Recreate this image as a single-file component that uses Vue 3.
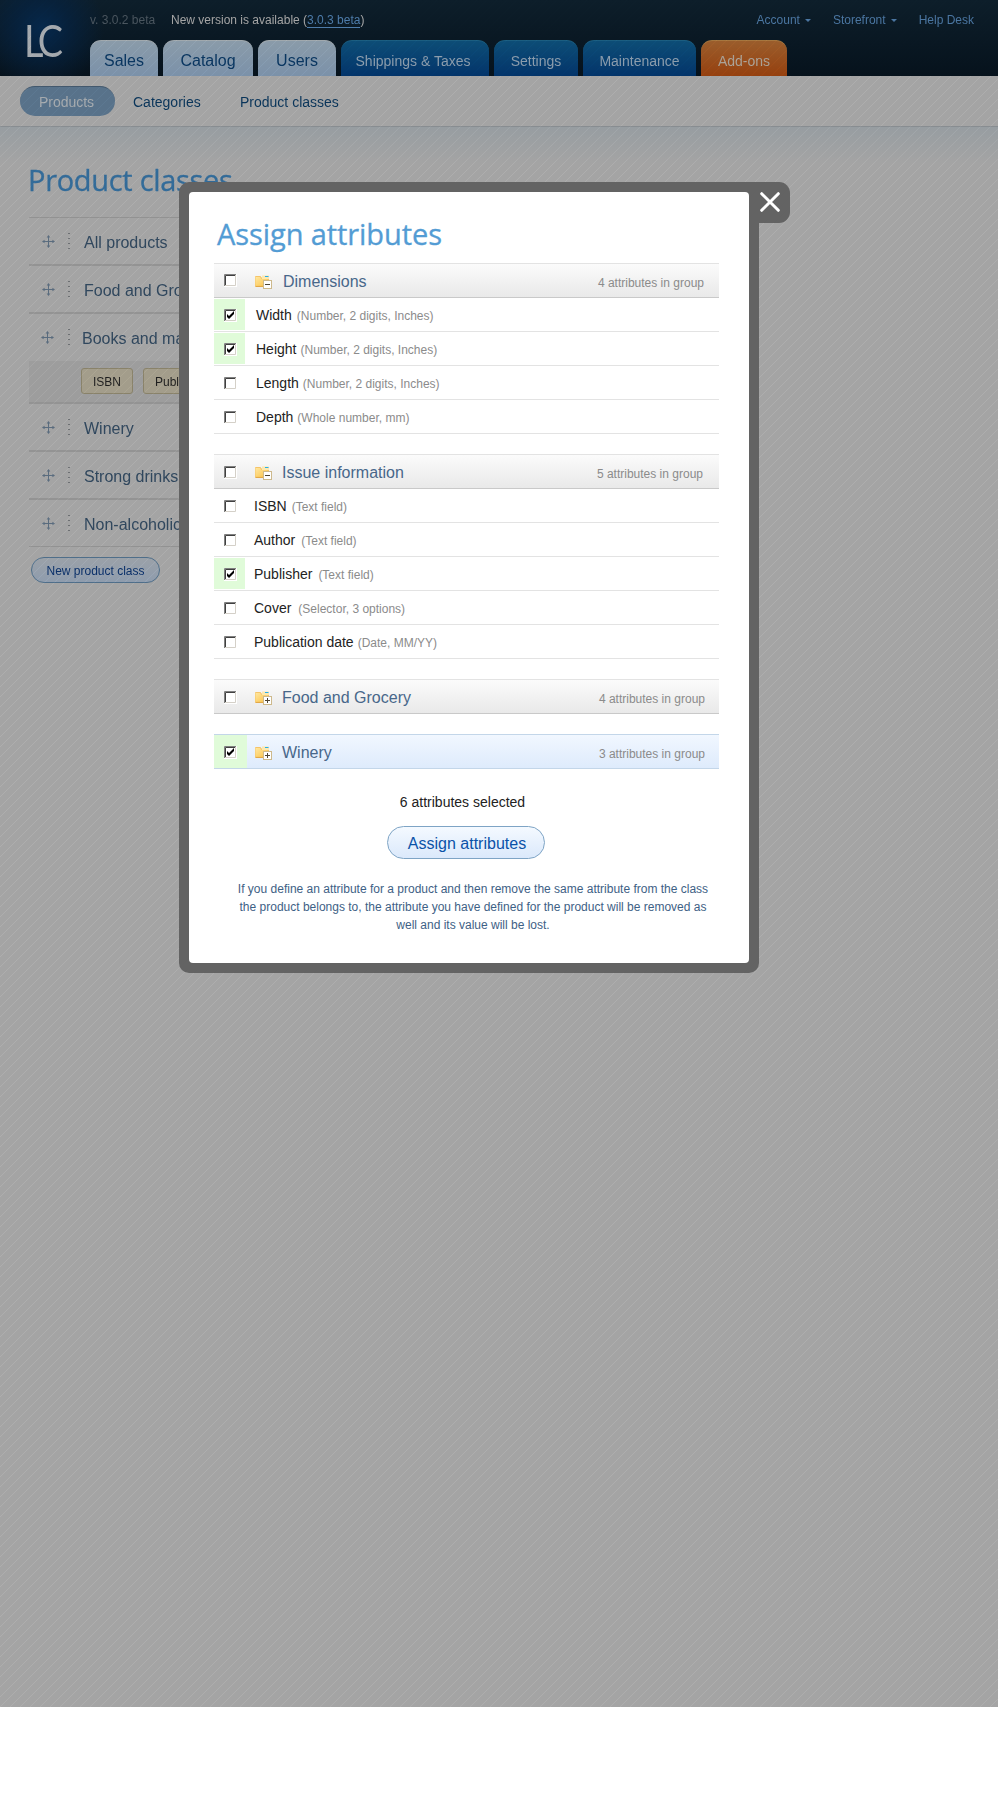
<script setup>
const tabs = [
  { label: 'Sales', kind: 'light', cls: 'w-sales' },
  { label: 'Catalog', kind: 'light', cls: 'w-catalog' },
  { label: 'Users', kind: 'light', cls: 'w-users' },
  { label: 'Shippings & Taxes', kind: 'blue', cls: 'w-ship' },
  { label: 'Settings', kind: 'blue', cls: 'w-settings' },
  { label: 'Maintenance', kind: 'blue', cls: 'w-maint' },
  { label: 'Add-ons', kind: 'orange', cls: 'w-addons' },
]

const classes = [
  { name: 'All products' },
  { name: 'Food and Grocery' },
  { name: 'Books and magazines', shifted: true, tags: ['ISBN', 'Publisher'] },
  { name: 'Winery' },
  { name: 'Strong drinks' },
  { name: 'Non-alcoholic drinks' },
]

const groups = [
  {
    name: 'Dimensions', count: 4, open: true, cls: 'first',
    items: [
      { name: 'Width', meta: '(Number, 2 digits, Inches)', on: true, gap: 5 },
      { name: 'Height', meta: '(Number, 2 digits, Inches)', on: true, gap: 4 },
      { name: 'Length', meta: '(Number, 2 digits, Inches)', gap: 4 },
      { name: 'Depth', meta: '(Whole number, mm)', gap: 4 },
    ],
  },
  {
    name: 'Issue information', count: 5, open: true, cls: 'second',
    items: [
      { name: 'ISBN', meta: '(Text field)', gap: 5 },
      { name: 'Author', meta: '(Text field)', gap: 6 },
      { name: 'Publisher', meta: '(Text field)', on: true, gap: 6 },
      { name: 'Cover', meta: '(Selector, 3 options)', gap: 7 },
      { name: 'Publication date', meta: '(Date, MM/YY)', gap: 4 },
    ],
  },
  { name: 'Food and Grocery', count: 4, items: [] },
  { name: 'Winery', count: 3, on: true, items: [] },
]
</script>

<template>
  <div class="screen">
    <div class="page">
      <header class="top">
        <div class="logo"><span>LC</span></div>
        <div class="bar">
          <div class="meta-line">
            <span class="ver">v. 3.0.2 beta</span>
            <span class="notice">New version is available (<a>3.0.3 beta</a>)</span>
            <nav class="links">
              <a>Account<i class="caret"></i></a>
              <a>Storefront<i class="caret"></i></a>
              <a>Help Desk</a>
            </nav>
          </div>
          <nav class="tabs">
            <a v-for="t in tabs" :key="t.label" class="tab" :class="[t.kind, t.cls]">{{ t.label }}</a>
          </nav>
        </div>
      </header>
      <nav class="sub">
        <a class="pill">Products</a>
        <a class="cat">Categories</a>
        <a class="pc">Product classes</a>
      </nav>
      <main class="content">
        <h1>Product classes</h1>
        <ul class="list">
          <li v-for="c in classes" :key="c.name">
            <div class="item" :class="{ shifted: c.shifted }">
              <svg class="move" width="13" height="13" viewBox="0 0 13 13">
                <path d="M6.5 1V12M1 6.5H12" stroke="#5a6c7e" stroke-width="1" />
                <path d="M6.5 0L8.3 2.6H4.7ZM6.5 13L8.3 10.4H4.7ZM0 6.5L2.6 4.7V8.3ZM13 6.5L10.4 4.7V8.3Z" fill="#5a6c7e" />
              </svg>
              <svg class="dots" width="2" height="18" viewBox="0 0 2 18">
                <path d="M0 1.5H2M0 6.5H2M0 11.5H2M0 16.5H2" stroke="#6c6f72" stroke-width="1.2" />
              </svg>
              <span>{{ c.name }}</span>
            </div>
            <div v-if="c.tags" class="tags">
              <span v-for="t in c.tags" :key="t" class="tag">{{ t }}</span>
            </div>
          </li>
        </ul>
        <button class="new">New product class</button>
      </main>
      <svg class="stripes" width="998" height="1707">
        <defs>
          <pattern id="hatch" width="10" height="10" patternUnits="userSpaceOnUse">
            <path d="M-3 10L10 -3M4 13L13 4M-3 0L0 -3" stroke="#0e0e0e" stroke-width="1" />
          </pattern>
        </defs>
        <rect width="998" height="1707" fill="url(#hatch)" />
      </svg>
    </div>

    <section class="modal">
      <div class="close">
        <svg width="20" height="20" viewBox="0 0 20 20">
          <path d="M1.7 1.7L18.3 18.3M18.3 1.7L1.7 18.3" stroke="#fff" stroke-width="3" stroke-linecap="round" />
        </svg>
      </div>
      <div class="dialog">
        <h2>Assign attributes</h2>
        <div v-for="(g, gi) in groups" :key="g.name" class="group" :class="g.cls">
          <div class="head" :class="{ active: g.on }">
            <div class="cell" :class="{ on: g.on }">
              <svg class="box" width="13" height="13" viewBox="0 0 13 13">
                <rect width="13" height="13" fill="#fff" />
                <path d="M1 11.5H11.5V1" fill="none" stroke="#d4d0c8" />
                <path d="M.5 12V.5H12" fill="none" stroke="#808080" />
                <path d="M1.5 11V1.5H11" fill="none" stroke="#404040" />
                <path v-if="g.on" d="M3 5v3l2 2 5-5V2L5 7Z" fill="#000" />
              </svg>
            </div>
            <svg class="folder" width="18" height="15" viewBox="0 0 18 15">
              <defs>
                <linearGradient :id="'fg' + gi" x1="0" y1="0" x2="1" y2="1">
                  <stop offset="0" stop-color="#ffe7a0" /><stop offset="1" stop-color="#fbc248" />
                </linearGradient>
              </defs>
              <path d="M0 2Q0 1 1 1H5.5L6.5 2.5H14V10L11 12H1L0 11Z" fill="#f5c469" />
              <path d="M7 .5H14V4H7Z" fill="#fde9b0" />
              <path d="M10 1.5H13.5" stroke="#2aaee8" />
              <path d="M.5 2H5L6.5 4H12.5V9L10.5 11H.5Z" :fill="`url(#fg${gi})`" />
              <path d="M.5 11.4H9" stroke="#e0a544" />
              <rect x="8.5" y="5.5" width="8" height="8" fill="#fff" stroke="#cdb98c" />
              <path d="M10 9.5H15" stroke="#4d4433" />
              <path v-if="!g.open" d="M12.5 7V12" stroke="#4d4433" />
            </svg>
            <span class="gname">{{ g.name }}</span>
            <span class="count">{{ g.count }} attributes in group</span>
          </div>
          <div v-for="a in g.items" :key="a.name" class="row">
            <div class="cell" :class="{ on: a.on }">
              <svg class="box" width="13" height="13" viewBox="0 0 13 13">
                <rect width="13" height="13" fill="#fff" />
                <path d="M1 11.5H11.5V1" fill="none" stroke="#d4d0c8" />
                <path d="M.5 12V.5H12" fill="none" stroke="#808080" />
                <path d="M1.5 11V1.5H11" fill="none" stroke="#404040" />
                <path v-if="a.on" d="M3 5v3l2 2 5-5V2L5 7Z" fill="#000" />
              </svg>
            </div>
            <span class="aname">{{ a.name }}</span>
            <span class="ameta" :style="{ marginLeft: a.gap + 'px' }">{{ a.meta }}</span>
          </div>
        </div>
        <div class="selected">6 attributes selected</div>
        <button class="assign">Assign attributes</button>
        <p class="note">
          If you define an attribute for a product and then remove the same attribute from the class<br />
          the product belongs to, the attribute you have defined for the product will be removed as<br />
          well and its value will be lost.
        </p>
      </div>
    </section>
  </div>
</template>

<style>
html, body { background: #fff; }
</style>

<style scoped>
* { box-sizing: border-box; }
.screen {
  position: relative;
  width: 998px;
  height: 1820px;
  overflow: hidden;
  font-family: "Liberation Sans", Arial, sans-serif;
  font-size: 12px;
}
.page { position: relative; height: 1707px; background: #a4a4a4; isolation: isolate; }
.stripes { position: absolute; left: 0; top: 0; mix-blend-mode: color-dodge; }

.top {
  display: flex;
  height: 76px;
  background:
    radial-gradient(ellipse 62px 62px at 42px 28px, #06284b 0%, rgba(6, 34, 64, .75) 45%, rgba(6, 30, 55, 0) 100%),
    linear-gradient(#0d1e2a, #06121c);
}
.logo {
  width: 90px;
  padding: 13px 0 0 24px;
  font: 44px/54px Lato, sans-serif;
  letter-spacing: -5px;
  color: #a3a8ad;
}
.logo span { display: inline-block; transform: scaleX(.86); transform-origin: left; }
.bar { flex: 1; display: flex; flex-direction: column; justify-content: space-between; }
.meta-line { display: flex; padding-top: 12px; line-height: 16px; }
.ver { width: 81px; color: #4a555e; }
.notice { color: #a4a4a4; }
.notice a { color: #4d7ba9; border-bottom: 1px solid #4d7ba9; }
.links { display: flex; margin-left: auto; padding-right: 24px; color: #4a75a0; }
.links a { display: flex; align-items: center; margin-left: 22px; }
.caret { margin: 1px 0 0 5px; border: 3px solid transparent; border-top-color: #4a75a0; border-bottom: 0; }

.tabs { display: flex; gap: 5px; }
.tab {
  height: 36px;
  border-radius: 11px 11px 0 0;
  text-align: center;
  font-size: 14px;
  line-height: 41px;
  color: #8a9bab;
}
.light { font-size: 16px; line-height: 39px; color: #0a3660; background: linear-gradient(#8a9ba9, #7b91a9); border-top: 1px solid #a0a8ad; }
.blue { background: linear-gradient(#0d4d76, #03346a); border-top: 1px solid #1b5d80; }
.orange { background: linear-gradient(#9a5d2c, #95400f); border-top: 1px solid #a5763f; color: #a9a095; }
.w-sales { width: 68px; }
.w-catalog { width: 90px; }
.w-users { width: 78px; }
.w-ship { width: 148px; padding-right: 4px; }
.w-settings { width: 84px; }
.w-maint { width: 113px; }
.w-addons { width: 86px; }

.sub {
  display: flex;
  height: 51px;
  padding: 10px 0 0 20px;
  border-bottom: 1px solid #888d91;
  font-size: 14px;
  line-height: 32px;
  color: #093459;
}
.pill { width: 95px; height: 30px; padding-right: 2px; border-radius: 15px; border-top: 1px solid #42586d; background: #58728a; color: #a4a9ad; text-align: center; }
.sub .pill { line-height: 30px; }
.cat { width: 107px; margin-left: 18px; }
.content { height: 400px; padding: 35px 0 0 29px; background: linear-gradient(#979da1, #a4a4a4 36px); }
h1, h2 { margin: 0; font: 400 29px/36px "Open Sans", sans-serif; -webkit-text-stroke: .3px; }
h1 { height: 55px; margin-left: -1px; letter-spacing: -.3px; color: #336b98; }
.list { width: 640px; margin: 0; padding: 0; list-style: none; border-top: 1px solid #929292; border-bottom: 1px solid #929292; }
.list li { border-bottom: 2px solid #939393; }
.list li:last-child { border: 0; }
.item { display: flex; align-items: center; height: 46px; padding-left: 13px; font-size: 16px; color: #30475d; }
.move { margin-right: 13px; }
.dots { margin-right: 14px; }
.item span { padding-top: 3px; }
.item.shifted { height: 47px; padding-left: 12px; padding-bottom: 1px; }
.shifted .move { margin-right: 14px; }
.shifted .dots { margin-right: 12px; }
.tags { display: flex; gap: 10px; height: 41px; padding: 7px 0 0 52px; background: #9d9d9d; }
.tag { height: 26px; padding: 0 11px; border: 1px solid #89826a; border-radius: 3px; background: #a39d8b; line-height: 26px; color: #1f1f1f; }
button { display: block; font: 12px "Liberation Sans", Arial, sans-serif; }
.new {
  width: 129px; height: 26px; margin: 10px 0 0 2px; padding: 2px 0 0;
  border: 1px solid #4f6e89; border-radius: 13px; background: linear-gradient(#9ba1a8, #8f9cad); color: #0b3069;
}

.modal {
  position: absolute; left: 179px; top: 182px; width: 580px; height: 791px;
  padding: 10px; background: #636363; border-radius: 10px 0 10px 10px;
}
.close {
  position: absolute; left: 580px; top: 0; width: 31px; height: 41px;
  border-radius: 0 11px 11px 0; background: #636363;
}
.close svg { display: block; margin: 10px 0 0 .5px; }
.dialog { height: 771px; padding: 24px 30px 0 25px; border-radius: 4px; background: #fff; }
h2 { height: 47px; padding-left: 3px; letter-spacing: -.08px; color: #539cd4; }
.group { margin-bottom: 20px; }
.head {
  display: flex; height: 35px; border-top: 1px solid #e3e3e3; border-bottom: 1px solid #c9c9c9;
  background: linear-gradient(#fbfbfb, #e9e9e9);
}
.active { border-color: #c3d6e9; background: linear-gradient(#f1f7ff, #deebfc); }
.cell { width: 33px; padding: 11px 0 0 10px; }
.cell.on { background: #e0fbd9; }
.box { display: block; }
.first .head .cell { padding-top: 10px; }
.folder { margin: 11px 9px 0 8px; }
.first .folder { margin-right: 10px; }
.gname { padding-top: 9px; line-height: 18px; font-size: 16px; color: #48678a; }
.count { margin-left: auto; padding: 11px 14px 0 0; line-height: 16px; color: #8b8b8b; }
.first .count { padding-right: 15px; }
.second .count { padding-right: 16px; }
.row { display: flex; height: 34px; border-bottom: 1px solid #e3e3e3; }
.row .cell { width: 31px; height: 31px; margin: 1px 11px 0 0; padding-top: 10px; }
.second .row .cell { margin-right: 9px; }
.aname { padding-top: 9px; line-height: 16px; font-size: 14px; color: #222; }
.ameta { padding-top: 10px; line-height: 16px; color: #8b8b8b; }
.selected { margin-top: 25px; padding-right: 8px; text-align: center; font-size: 14px; line-height: 16px; color: #222; }
.assign {
  width: 158px; height: 33px; margin: 16px 0 0 173px; padding: 3px 0 0 2px;
  border: 1px solid #7ea4c5; border-radius: 17px; background: linear-gradient(#f4f9ff, #dbe9fb);
  font-size: 16px; color: #0b52a8;
}
.note { margin: 21px -20px 0 -7px; text-align: center; line-height: 18px; color: #3e6185; white-space: nowrap; }
</style>
